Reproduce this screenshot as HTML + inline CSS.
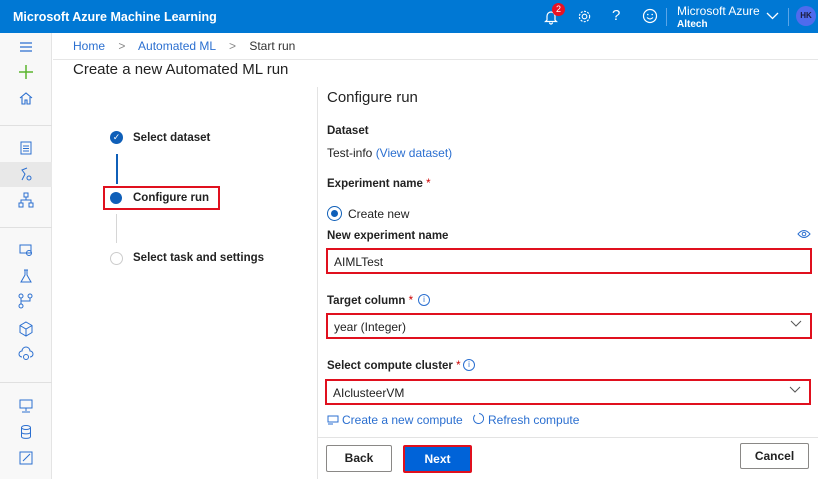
<!DOCTYPE html>
<html><head><style>
*{margin:0;padding:0;box-sizing:border-box}
body{width:818px;height:479px;overflow:hidden;font-family:"Liberation Sans",sans-serif;font-size:12px;color:#222;background:#fff;position:relative}
.a{position:absolute}
.hdr{left:0;top:0;width:818px;height:33px;background:#0078d4;color:#fff}
.side{left:0;top:33px;width:52px;height:446px;background:#f8f8f8;border-right:1px solid #e4e4e4}
.ic{position:absolute;left:18px;width:16px;height:16px}
.lbl{font-weight:bold;font-size:11.5px;color:#222}
.box{position:absolute;left:326px;width:486px;height:26px;border:2px solid #e0101e;padding:5px 6px;font-size:12px}
.chev{position:absolute;right:8px;top:5px}
.btn{position:absolute;border:1px solid #8a8886;background:#fff;font-weight:bold;text-align:center;font-size:12px;border-radius:2px}
</style></head><body>
<div class="a hdr">
 <div class="a" style="left:13px;top:10px;font-weight:bold;font-size:12.5px">Microsoft Azure Machine Learning</div>
 <svg class="a" style="left:544px;top:9px" width="14" height="16" viewBox="0 0 14 16"><path d="M3 11V7a4 4 0 0 1 8 0v4l1.5 1.5h-11z M5.5 13.5a1.5 1.5 0 0 0 3 0" fill="none" stroke="#fff" stroke-width="1.2"/></svg>
 <div class="a" style="left:552px;top:3px;width:13px;height:13px;border-radius:50%;background:#e81123;font-size:9px;text-align:center;line-height:13px">2</div>
 <svg class="a" style="left:577px;top:9px" width="15" height="15" viewBox="0 0 16 16"><circle cx="8" cy="8" r="2.5" fill="none" stroke="#fff" stroke-width="1.2"/><circle cx="8" cy="8" r="5.5" fill="none" stroke="#fff" stroke-width="1.2" stroke-dasharray="2.2 1.4"/></svg>
 <div class="a" style="left:612px;top:7px;font-size:15px">?</div>
 <svg class="a" style="left:642px;top:8px" width="16" height="16" viewBox="0 0 16 16"><circle cx="8" cy="8" r="6.5" fill="none" stroke="#fff" stroke-width="1.2"/><circle cx="5.8" cy="6.5" r=".8" fill="#fff"/><circle cx="10.2" cy="6.5" r=".8" fill="#fff"/><path d="M5 9.5q3 3 6 0" fill="none" stroke="#fff" stroke-width="1.1"/></svg>
 <div class="a" style="left:666px;top:8px;width:1px;height:18px;background:#5aa5e8"></div>
 <div class="a" style="left:677px;top:4px;font-size:12px">Microsoft Azure</div>
 <div class="a" style="left:677px;top:19px;font-size:10px;font-weight:bold">Altech</div>
 <svg class="a" style="left:766px;top:12px" width="13" height="8" viewBox="0 0 13 8"><path d="M1 1l5.5 5.5L12 1" fill="none" stroke="#fff" stroke-width="1.3"/></svg>
 <div class="a" style="left:788px;top:8px;width:1px;height:18px;background:#5aa5e8"></div>
 <div class="a" style="left:796px;top:6px;width:20px;height:20px;border-radius:50%;background:#4f6bed;color:#1b1b3a;font-size:8px;font-weight:bold;text-align:center;line-height:20px">HK</div>
</div>
<div class="a side">
 <svg class="ic" style="top:6px" viewBox="0 0 16 16"><path d="M2 4h12M2 8h12M2 12h12" stroke="#2b6fd0" stroke-width="1.2"/></svg>
 <svg class="ic" style="top:31px" viewBox="0 0 16 16"><path d="M8 1v14M1 8h14" stroke="#5ab52e" stroke-width="1.5"/></svg>
 <svg class="ic" style="top:57px" viewBox="0 0 16 16"><path d="M2 8l6-5 6 5M4 7v7h3v-4h2v4h3V7" fill="none" stroke="#2b6fd0" stroke-width="1.1"/></svg>
 <div class="a" style="left:0;top:92px;width:52px;height:1px;background:#e0e0e0"></div>
 <svg class="ic" style="top:107px" viewBox="0 0 16 16"><rect x="3" y="2" width="10" height="12" fill="none" stroke="#2b6fd0"/><path d="M5 6h6M5 8.5h6M5 11h6" stroke="#2b6fd0"/></svg>
 <div class="a" style="left:0;top:129px;width:52px;height:25px;background:#e8e8e8"></div>
 <svg class="ic" style="top:133px" viewBox="0 0 16 16"><path d="M4 14l3-6-3-4 5-2" fill="none" stroke="#2b6fd0"/><circle cx="11" cy="12" r="2" fill="none" stroke="#2b6fd0"/></svg>
 <svg class="ic" style="top:159px" viewBox="0 0 16 16"><rect x="6" y="1" width="4" height="4" fill="none" stroke="#2b6fd0"/><rect x="1" y="11" width="4" height="4" fill="none" stroke="#2b6fd0"/><rect x="11" y="11" width="4" height="4" fill="none" stroke="#2b6fd0"/><path d="M8 5v3M3 11V8h10v3" fill="none" stroke="#2b6fd0"/></svg>
 <div class="a" style="left:0;top:194px;width:52px;height:1px;background:#e0e0e0"></div>
 <svg class="ic" style="top:209px" viewBox="0 0 16 16"><rect x="2" y="3" width="11" height="8" fill="none" stroke="#2b6fd0"/><circle cx="11" cy="11" r="2.5" fill="none" stroke="#2b6fd0"/></svg>
 <svg class="ic" style="top:235px" viewBox="0 0 16 16"><path d="M6 2h4M7 2v5l-4 7h10l-4-7V2" fill="none" stroke="#2b6fd0"/></svg>
 <svg class="ic" style="top:260px" viewBox="0 0 16 16"><circle cx="3" cy="3" r="2" fill="none" stroke="#2b6fd0"/><circle cx="12" cy="3" r="2" fill="none" stroke="#2b6fd0"/><circle cx="3" cy="13" r="2" fill="none" stroke="#2b6fd0"/><path d="M3 5v6M12 5v3H3" fill="none" stroke="#2b6fd0"/></svg>
 <svg class="ic" style="top:288px" viewBox="0 0 16 16"><path d="M8 1l6 3.5v7L8 15l-6-3.5v-7zM2 4.5L8 8l6-3.5M8 8v7" fill="none" stroke="#2b6fd0"/></svg>
 <svg class="ic" style="top:313px" viewBox="0 0 16 16"><path d="M4 11a3 3 0 0 1 0-6 4 4 0 0 1 8 0 3 3 0 0 1 0 6" fill="none" stroke="#2b6fd0"/><circle cx="8" cy="11" r="2.5" fill="none" stroke="#2b6fd0"/></svg>
 <div class="a" style="left:0;top:349px;width:52px;height:1px;background:#e0e0e0"></div>
 <svg class="ic" style="top:365px" viewBox="0 0 16 16"><rect x="2" y="2" width="12" height="8" fill="none" stroke="#2b6fd0"/><path d="M8 10v3M4 14h8" stroke="#2b6fd0"/></svg>
 <svg class="ic" style="top:391px" viewBox="0 0 16 16"><ellipse cx="8" cy="3.5" rx="4.5" ry="2" fill="none" stroke="#2b6fd0"/><path d="M3.5 3.5v9c0 2.5 9 2.5 9 0v-9M3.5 8c0 2.5 9 2.5 9 0" fill="none" stroke="#2b6fd0"/></svg>
 <svg class="ic" style="top:417px" viewBox="0 0 16 16"><rect x="2" y="2" width="12" height="12" fill="none" stroke="#2b6fd0"/><path d="M5 11l7-7" stroke="#2b6fd0"/></svg>
</div>
<div class="a" style="left:53px;top:59px;width:765px;height:1px;background:#e6e6e6"></div>
<div class="a" style="left:73px;top:39px;font-size:12px;color:#2b6fd0">Home <span style="color:#888;margin:0 10px">&gt;</span> Automated ML <span style="color:#888;margin:0 10px">&gt;</span> <span style="color:#333">Start run</span></div>
<div class="a" style="left:73px;top:61px;font-size:15px;color:#222">Create a new Automated ML run</div>
<div class="a" style="left:317px;top:87px;width:1px;height:392px;background:#e3e3e3"></div>
<div class="a" style="left:110px;top:131px;width:13px;height:13px;border-radius:50%;background:#0f5fb8;color:#fff;font-size:9px;text-align:center;line-height:13px">✓</div>
<div class="a lbl" style="left:133px;top:132px">Select dataset</div>
<div class="a" style="left:116px;top:154px;width:2px;height:30px;background:#0f5fb8"></div>
<div class="a" style="left:103px;top:186px;width:117px;height:24px;border:2px solid #e0101e"></div>
<div class="a" style="left:110px;top:192px;width:12px;height:12px;border-radius:50%;background:#0f5fb8"></div>
<div class="a lbl" style="left:133px;top:192px">Configure run</div>
<div class="a" style="left:116px;top:214px;width:1px;height:29px;background:#d6d6d6"></div>
<div class="a" style="left:110px;top:252px;width:13px;height:13px;border-radius:50%;border:1px solid #ccc"></div>
<div class="a lbl" style="left:133px;top:252px">Select task and settings</div>
<div class="a" style="left:327px;top:89px;font-size:15px">Configure run</div>
<div class="a lbl" style="left:327px;top:125px">Dataset</div>
<div class="a" style="left:327px;top:146px">Test-info <span style="color:#2b6fd0">(View dataset)</span></div>
<div class="a lbl" style="left:327px;top:178px">Experiment name <span style="color:#c00;font-weight:normal">*</span></div>
<div class="a" style="left:327px;top:206px;width:15px;height:15px;border-radius:50%;border:1px solid #0f5fb8"></div>
<div class="a" style="left:331px;top:210px;width:7px;height:7px;border-radius:50%;background:#0f5fb8"></div>
<div class="a" style="left:348px;top:207px">Create new</div>
<div class="a lbl" style="left:327px;top:230px">New experiment name</div>
<svg class="a" style="left:797px;top:229px" width="14" height="10" viewBox="0 0 14 10"><path d="M1 5q6-7 12 0q-6 7-12 0z" fill="none" stroke="#2b6fd0"/><circle cx="7" cy="5" r="1.8" fill="none" stroke="#2b6fd0"/></svg>
<div class="box" style="top:248px">AIMLTest</div>
<div class="a lbl" style="left:327px;top:295px">Target column <span style="color:#c00;font-weight:normal">*</span></div>
<div class="a" style="left:418px;top:294px;width:12px;height:12px;border-radius:50%;border:1px solid #2b6fd0;color:#2b6fd0;font-size:8px;text-align:center;line-height:10px">i</div>
<div class="box" style="top:313px">year (Integer)<svg class="chev" width="12" height="8" viewBox="0 0 12 8"><path d="M1 1l5 5 5-5" fill="none" stroke="#555"/></svg></div>
<div class="a lbl" style="left:327px;top:360px">Select compute cluster <span style="color:#c00;font-weight:normal">*</span></div>
<div class="a" style="left:463px;top:359px;width:12px;height:12px;border-radius:50%;border:1px solid #2b6fd0;color:#2b6fd0;font-size:8px;text-align:center;line-height:10px">i</div>
<div class="box" style="top:379px;left:325px">AIclusteerVM<svg class="chev" width="12" height="8" viewBox="0 0 12 8"><path d="M1 1l5 5 5-5" fill="none" stroke="#555"/></svg></div>
<svg class="a" style="left:327px;top:415px" width="12" height="10" viewBox="0 0 12 10"><rect x="1" y="1" width="10" height="6" fill="none" stroke="#2b6fd0"/><path d="M1 9h5" stroke="#2b6fd0"/></svg>
<div class="a" style="left:342px;top:413px;color:#2b6fd0">Create a new compute</div>
<svg class="a" style="left:472px;top:412px" width="12" height="13" viewBox="0 0 12 13"><path d="M3 3a5 5 0 1 0 4-1.5" fill="none" stroke="#2b6fd0"/></svg>
<div class="a" style="left:488px;top:413px;color:#2b6fd0">Refresh compute</div>
<div class="a" style="left:318px;top:437px;width:500px;height:1px;background:#e3e3e3"></div>
<div class="btn" style="left:326px;top:445px;width:66px;height:27px;line-height:25px">Back</div>
<div class="btn" style="left:403px;top:445px;width:69px;height:28px;line-height:24px;background:#0063d8;color:#fff;border:2px solid #e0101e">Next</div>
<div class="btn" style="left:740px;top:443px;width:69px;height:26px;line-height:24px">Cancel</div>
</body></html>
